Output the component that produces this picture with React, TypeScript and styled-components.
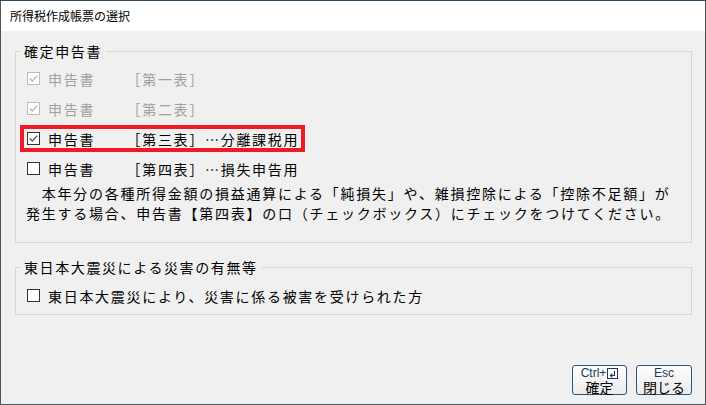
import React from "react";
import styled, { createGlobalStyle } from "styled-components";

const Global = createGlobalStyle`
  html, body { margin: 0; padding: 0; background: #6b6b6b; }
  body {
    font-family: "Noto Sans CJK JP", "Noto Sans", sans-serif;
    text-spacing-trim: space-all;
  }
`;

const Window = styled.div`
  box-sizing: border-box;
  width: 706px;
  height: 405px;
  border: 1px solid #4f5458;
  border-top-color: #2e4a5c;
  background: #f0f0f0;
  display: flex;
  flex-direction: column;
`;

const TitleBar = styled.div`
  height: 30px;
  flex: none;
  background: #ffffff;
  display: flex;
  align-items: center;
  padding-left: 9px;
  font-size: 12px;
  color: #000;
  line-height: 1;
`;

const Body = styled.div`
  flex: 1;
  display: flex;
  flex-direction: column;
  padding: 0 13px 9px 14px;
`;

const Group = styled.fieldset<{ $top: number; $pt: number; $pb: number }>`
  margin: ${(p) => p.$top}px 0 0 0;
  border: 1px solid #d6d6d6;
  padding: ${(p) => p.$pt}px 4px ${(p) => p.$pb}px 4px;
  min-width: 0;
`;

const Legend = styled.legend`
  padding: 0 4px;
  font-size: 14px;
  line-height: 18px;
  letter-spacing: 1.6px;
  color: #000;
`;

const Row = styled.div<{ $highlight?: boolean; $disabled?: boolean; $last?: boolean }>`
  box-sizing: border-box;
  display: flex;
  align-items: center;
  width: fit-content;
  height: 27px;
  border: 4px solid ${(p) => (p.$highlight ? "#ed1c24" : "transparent")};
  padding: 0 2px 0 3px;
  margin-bottom: ${(p) => (p.$last ? 0 : 3)}px;
  font-size: 14px;
  letter-spacing: 1.7px;
  white-space: pre;
  color: ${(p) => (p.$disabled ? "#a0a0a0" : "#000")};
`;

const Box = styled.span<{ $disabled?: boolean }>`
  box-sizing: border-box;
  width: 13px;
  height: 13px;
  flex: none;
  border: 1px solid ${(p) => (p.$disabled ? "#bcbcbc" : "#333333")};
  background: #ffffff;
  margin-right: 8px;
  display: flex;
  align-items: center;
  justify-content: center;
`;

const Ellipsis = styled.span`
  display: inline-block;
  width: 14px;
  margin-right: 1.7px;
  text-align: center;
  letter-spacing: 0;
`;

const Note = styled.p`
  margin: 1px 0 0 6px;
  font-size: 14px;
  line-height: 20px;
  letter-spacing: 1.75px;
  white-space: pre;
  color: #000;
`;

const Footer = styled.div`
  margin-top: auto;
  display: flex;
  justify-content: flex-end;
  gap: 9px;
`;

const KeyButton = styled.button<{ $w: number }>`
  box-sizing: border-box;
  width: ${(p) => p.$w}px;
  height: 30px;
  padding: 0;
  border: 1px solid #2b5682;
  border-radius: 3px;
  background: linear-gradient(#fefefe, #ebebeb);
  display: flex;
  flex-direction: column;
  align-items: center;
  justify-content: center;
  font-family: "Noto Sans CJK JP", sans-serif;
`;

const KeyTop = styled.span`
  display: flex;
  align-items: center;
  gap: 1px;
  height: 13px;
  font-family: "Liberation Sans", "DejaVu Sans", sans-serif;
  font-size: 12px;
  line-height: 13px;
  color: #1f3858;
`;

const KeyLabel = styled.span`
  font-size: 14px;
  line-height: 14px;
  height: 14px;
  color: #000;
`;

const Check = ({ color }: { color: string }) => (
  <svg width="11" height="11" viewBox="0 0 11 11">
    <path d="M1.8 5.6 L4.3 8.1 L9.2 2.6" fill="none" stroke={color} strokeWidth="1.4" />
  </svg>
);

const EnterIcon = () => (
  <svg width="11" height="11" viewBox="0 0 11 11">
    <rect x="0.5" y="0.5" width="10" height="10" fill="#fff" stroke="#1f3858" />
    <path d="M7.5 3 V7.5 H3.5" fill="none" stroke="#1f3858" strokeWidth="1.1" />
    <path d="M5.3 5.6 L3.3 7.5 L5.3 9.4" fill="none" stroke="#1f3858" strokeWidth="1.1" />
  </svg>
);

type Item = { label: string; checked: boolean; note?: string; disabled?: boolean; highlight?: boolean };

const items: Item[] = [
  { label: "申告書　　［第一表］", checked: true, disabled: true },
  { label: "申告書　　［第二表］", checked: true, disabled: true },
  { label: "申告書　　［第三表］", note: "分離課税用", checked: true, highlight: true },
  { label: "申告書　　［第四表］", note: "損失申告用", checked: false },
];

export default function App() {
  return (
    <>
      <Global />
      <Window>
        <TitleBar>所得税作成帳票の選択</TitleBar>
        <Body>
          <Group $top={11} $pt={5} $pb={19}>
            <Legend>確定申告書</Legend>
            {items.map((it, i) => (
              <Row key={i} $disabled={it.disabled} $highlight={it.highlight} $last={i === items.length - 1}>
                <Box $disabled={it.disabled}>
                  {it.checked && <Check color={it.disabled ? "#b4b4b4" : "#555555"} />}
                </Box>
                {it.label}
                {it.note && (
                  <>
                    <Ellipsis>⋯</Ellipsis>
                    {it.note}
                  </>
                )}
              </Row>
            ))}
            <Note>
              {"\u3000本年分の各種所得金額の損益通算による「純損失」や、雑損控除による「控除不足額」が\n発生する場合、申告書【第四表】の口（チェックボックス）にチェックをつけてください。"}
            </Note>
          </Group>
          <Group $top={15} $pt={6} $pb={5}>
            <Legend>東日本大震災による災害の有無等</Legend>
            <Row $last>
              <Box />
              東日本大震災により、災害に係る被害を受けられた方
            </Row>
          </Group>
          <Footer>
            <KeyButton $w={55}>
              <KeyTop>
                Ctrl+
                <EnterIcon />
              </KeyTop>
              <KeyLabel>確定</KeyLabel>
            </KeyButton>
            <KeyButton $w={56}>
              <KeyTop>Esc</KeyTop>
              <KeyLabel>閉じる</KeyLabel>
            </KeyButton>
          </Footer>
        </Body>
      </Window>
    </>
  );
}
